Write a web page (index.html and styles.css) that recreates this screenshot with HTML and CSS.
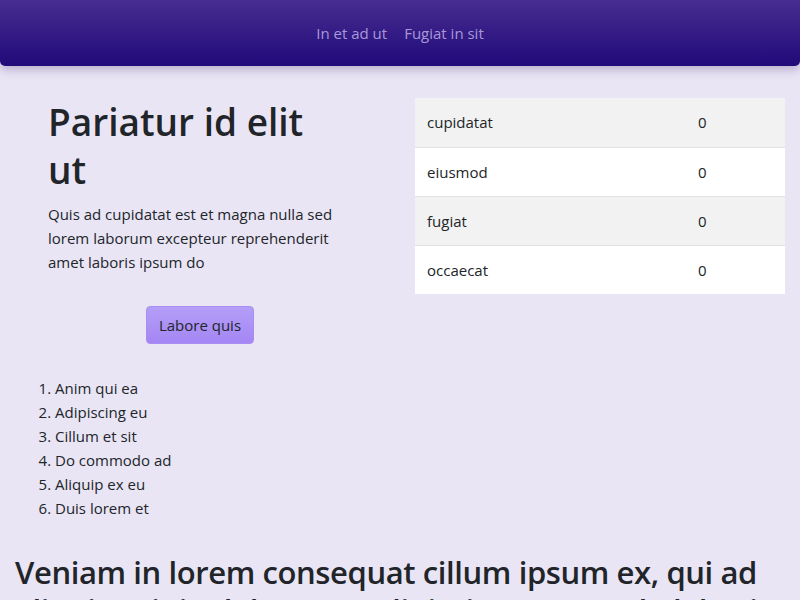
FILE: index.html
```html
<!DOCTYPE html>
<html lang="en">
<head>
<meta charset="utf-8">
<title>Page</title>
<link rel="stylesheet" href="styles.css">
</head>
<body>
<nav class="topbar">
  <a class="navlink" href="#">In et ad ut</a>
  <a class="navlink" href="#">Fugiat in sit</a>
</nav>
<main class="main">
  <div class="columns">
    <section class="intro">
      <h1 class="title">Pariatur id elit ut</h1>
      <p class="lead">Quis ad cupidatat est et magna nulla sed lorem laborum excepteur reprehenderit amet laboris ipsum do</p>
      <div class="btn-row"><button class="btn">Labore quis</button></div>
    </section>
    <section class="side">
      <table class="data">
        <colgroup><col class="col-name"><col class="col-val"></colgroup>
        <tbody>
          <tr><td>cupidatat</td><td>0</td></tr>
          <tr><td>eiusmod</td><td>0</td></tr>
          <tr><td>fugiat</td><td>0</td></tr>
          <tr><td>occaecat</td><td>0</td></tr>
        </tbody>
      </table>
    </section>
  </div>
  <ol class="items">
    <li>Anim qui ea</li>
    <li>Adipiscing eu</li>
    <li>Cillum et sit</li>
    <li>Do commodo ad</li>
    <li>Aliquip ex eu</li>
    <li>Duis lorem et</li>
  </ol>
  <h2 class="subtitle">Veniam in lorem consequat cillum ipsum ex, qui ad aliquip minim labore ut adipiscing commodo laboris aliqua</h2>
</main>
</body>
</html>
```
FILE: styles.css
```css
* { box-sizing: border-box; }
html, body { margin: 0; padding: 0; }
body {
  background: #e9e5f5;
  color: #212529;
  font-family: "Open Sans", "Noto Sans", sans-serif;
  font-size: 15px;
  line-height: 24px;
  overflow: hidden;
  height: 600px;
}
.topbar {
  height: 66px;
  display: flex;
  justify-content: center;
  align-items: center;
  gap: 17px;
  background: linear-gradient(#472d90, #210a7a);
  border-radius: 0 0 5px 5px;
  box-shadow: 0 4px 10px rgba(40, 20, 90, 0.25);
  position: relative;
  z-index: 1;
}
.navlink {
  color: #a898d8;
  text-decoration: none;
  font-size: 15px;
}
.main { padding: 32px 15px 0; }
.columns { display: flex; gap: 30px; }
.intro { width: 370px; padding: 0 33px; }
.title {
  font-size: 37px;
  line-height: 48px;
  font-weight: 600;
  margin: 0 0 8px;
  max-width: 290px;
}
.lead { margin: 0; }
.btn-row { display: flex; justify-content: center; padding-top: 32px; }
.btn {
  font-family: inherit;
  font-size: 15px;
  color: #212529;
  background: linear-gradient(#b49ef8, #a486f4);
  border: 1px solid #a98ef2;
  border-radius: 4px;
  height: 38px;
  padding: 0 12px;
}
.side { width: 370px; }
.data { width: 100%; border-collapse: collapse; background: #fff; }
.col-name { width: 271px; }
.data td { height: 49px; padding: 0 12px; border-top: 1px solid #dee2e6; }
.data tr:first-child td { border-top: 0; height: 49px; }
.data tr:nth-child(odd) td { background: #f2f2f2; }
.items { margin: 32px 0 0; padding-left: 40px; }
.subtitle {
  font-size: 31px;
  line-height: 38px;
  font-weight: 600;
  margin: 33px 0 0;
  letter-spacing: -0.4px;
}
```
